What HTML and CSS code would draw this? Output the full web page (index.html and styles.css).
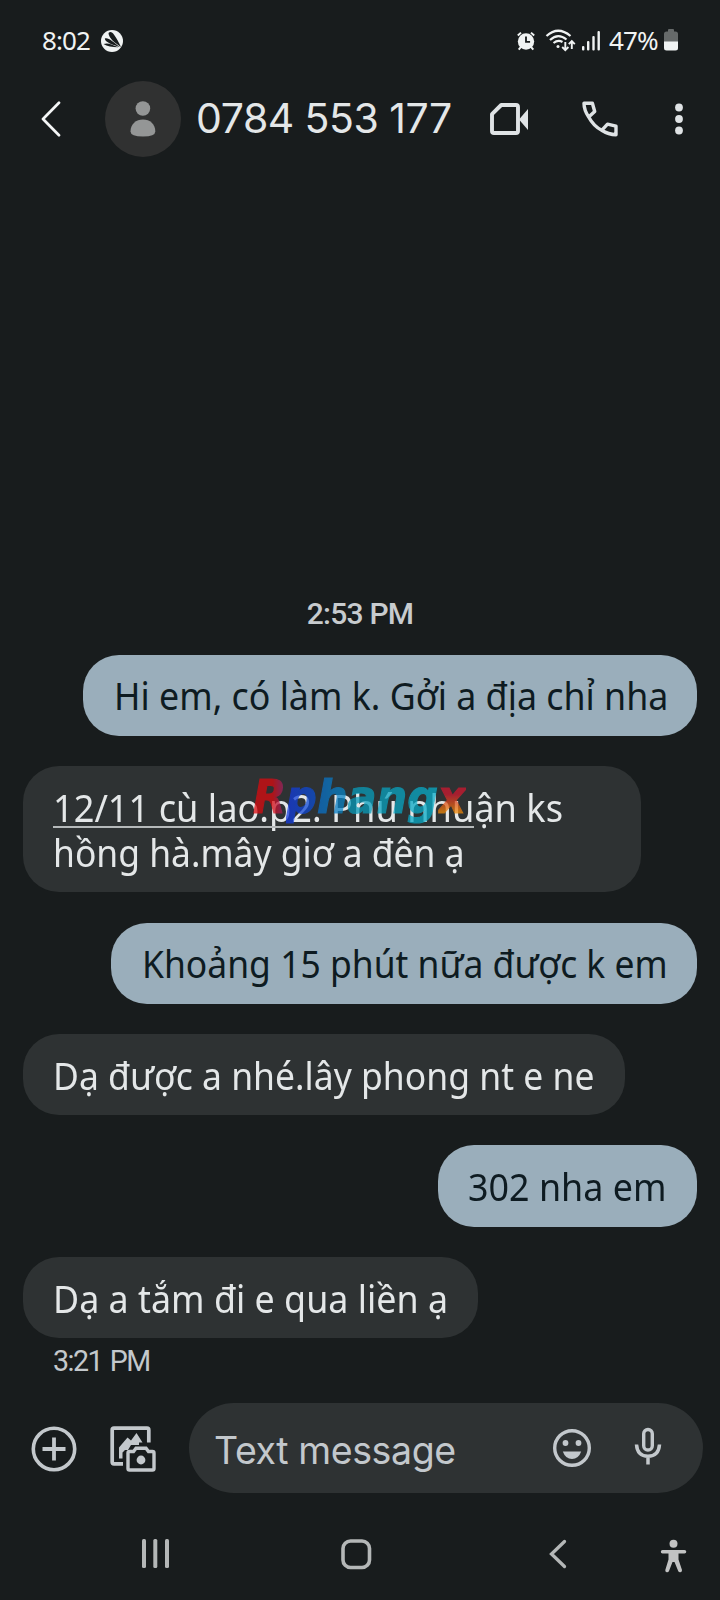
FILE: index.html
```html
<!DOCTYPE html>
<html lang="vi">
<head>
<meta charset="utf-8">
<title>0784 553 177</title>
<link rel="stylesheet" href="styles.css">
</head>
<body>
<div class="phone">
  <header class="status">
    <span class="clock">8:02</span>
    <svg class="i-app" width="24" height="24" viewBox="0 0 24 24"><circle cx="12" cy="12" r="11" fill="#f0f3f3"/><g fill="#181c1d"><path d="M8.500 4C11 1 14 3.500 21 18C15 14 8.500 9 8.500 4Z"/><path d="M4.800 9.500C8 8 13 12.500 20 18.200C13 15.700 5 13.500 4.800 9.500Z"/><path d="M3.500 15C8 13.300 12 15.500 18.500 18.300C12 17.800 7 17.500 3.500 15Z"/></g></svg>
    <span class="grow"></span>
    <svg class="i-alarm" width="20" height="20" viewBox="0 0 20 22"><circle cx="10" cy="11.500" r="9" fill="#f0f3f3"/><path d="M10 6v6h4.500" fill="none" stroke="#181c1d" stroke-width="2"/><path d="M1 5L4.500 1.800M19 5L15.500 1.800M4.500 17.500L2 20.500M15.500 17.500L18 20.500" stroke="#f0f3f3" stroke-width="2.200"/></svg>
    <svg class="i-wifi" width="31" height="24" viewBox="0 0 31 24" fill="none" stroke="#f0f3f3" stroke-width="2.200"><path d="M1.500 8Q13 -2.500 25.500 8M5 12Q13 4.500 21.500 11.500M8.500 15Q13 11.500 17.500 14"/><circle cx="13" cy="18.500" r="1.500" fill="#f0f3f3" stroke="none"/><path d="M20.300 14v8M17.200 19l3.100 3.100 3.100-3.100M26.800 21v-7.500M23.800 16.200l3-3 3 3" stroke-width="1.900"/></svg>
    <svg class="i-signal" width="18" height="20" viewBox="0 0 18 20" fill="#f0f3f3"><rect x="0" y="15" width="2.400" height="4.500" rx="1"/><rect x="5" y="10" width="2.400" height="9.500" rx="1"/><rect x="10.300" y="5" width="2.400" height="14.500" rx="1"/><rect x="15.500" y="0" width="2.400" height="19.500" rx="1"/></svg>
    <span class="percent">47%</span>
    <svg class="i-battery" width="14" height="22" viewBox="0 0 14 22"><path d="M4 2.500V1q0-1 1-1h4q1 0 1 1v1.500h1.500q2.500 0 2.500 2.500v8H0V5q0-2.500 2.500-2.500z" fill="#666a6a"/><path d="M0 12.500h14v6.500q0 2.500-2.500 2.500h-9Q0 21.500 0 19z" fill="#f0f3f3"/></svg>
  </header>

  <div class="appbar">
    <svg class="i-back" width="20" height="36" viewBox="0 0 20 36"><path d="M18 1.800L2 18l16 16.200" fill="none" stroke="#f4f6f6" stroke-width="2.700" stroke-linecap="round" stroke-linejoin="round"/></svg>
    <div class="avatar"><svg width="26" height="36" viewBox="0 0 26 36" fill="#949696"><circle cx="12.900" cy="7.500" r="7.300"/><path d="M.5 30.500C.5 23 6 18.500 13 18.500S25.300 23 25.300 30.500Q25.300 35.500 13 35.500T.5 30.500z"/></svg></div>
    <h1 class="title">0784 553 177</h1>
    <span class="grow"></span>
    <svg class="i-video" width="39" height="32" viewBox="0 0 39 32"><path d="M11.200 2H26q2 0 2 2v24q0 2-2 2H4q-2 0-2-2V11.200z" fill="none" stroke="#dfe3e5" stroke-width="3.900" stroke-linejoin="round"/><path d="M29 16.500L38 6v21z" fill="#dfe3e5"/></svg>
    <svg class="i-call" width="36" height="36" viewBox="0 0 36 36" fill="none" stroke="#dfe3e5" stroke-width="3.400" stroke-linejoin="round"><path d="M2 2.200h8.400l2.300 8.300-6 5.500Q2 9 2 2.200zM6.700 16Q11.500 25 19.700 29.300M19.700 29.300l5.800-6.200 8.500 2.100v8.500q-7.500 0-14.300-4.400z"/></svg>
    <svg class="i-more" width="8" height="32" viewBox="0 0 8 32" fill="#dfe3e5"><circle cx="4" cy="4.500" r="3.900"/><circle cx="4" cy="16" r="3.900"/><circle cx="4" cy="27.500" r="3.900"/></svg>
  </div>

  <main class="thread">
    <time class="day">2:53 PM</time>
    <div class="bubble sent w1"><span class="t1">Hi em, có làm k. Gởi a địa chỉ nha</span></div>
    <div class="bubble recv w2">
      <span class="t2">12/11 cù lao.p2. Phú nhuận ks</span>
      <span class="t3">hồng hà.mây giơ a đên ạ</span>
      <i class="rule"></i>
      <div class="mark"><span class="m1">R</span><span class="m2">p</span><span class="m3">h</span><span class="m4">ang</span><span class="m5">x</span></div>
    </div>
    <div class="bubble sent w3"><span class="t4">Khoảng 15 phút nữa được k em</span></div>
    <div class="bubble recv w4"><span class="t5">Dạ được a nhé.lây phong nt e ne</span></div>
    <div class="bubble sent w5"><span class="t6">302 nha em</span></div>
    <div class="bubble recv w6"><span class="t7">Dạ a tắm đi e qua liền ạ</span></div>
    <time class="stamp">3:21 PM</time>
  </main>

  <footer class="composer">
    <svg class="i-plus" width="46" height="46" viewBox="0 0 46 46" fill="none" stroke="#c3c8cc" stroke-width="3.600"><circle cx="23" cy="23" r="20.700"/><path d="M23 11.500v23M11.500 23h23" stroke-width="3.800"/></svg>
    <svg class="i-gallery" width="46" height="46" viewBox="0 0 46 46"><path d="M13 37.800H4q-1.800 0-1.800-1.800V4Q2.200 2.200 4 2.200h33q1.800 0 1.800 1.800v12.500" fill="none" stroke="#c3c8cc" stroke-width="3.700"/><path d="M9 32.500V21.500l8.500-10 3.500 3 5.500-7.500 6 9.500h-3.500v2.500h-8l-3 5h-3l-2.500 2.500v6z" fill="#c3c8cc"/><path d="M19.500 25.500h4l2.500-3.200h10l2.500 3.200h4q1.500 0 1.500 1.500v15.500q0 1.500-1.500 1.500h-23q-1.500 0-1.500-1.500V27q0-1.500 1.500-1.500z" fill="#181c1d" stroke="#c3c8cc" stroke-width="3.400"/><circle cx="31" cy="34" r="4.400" fill="#c3c8cc"/></svg>
    <div class="field">
      <span class="placeholder">Text message</span>
      <span class="grow"></span>
      <svg class="i-smile" width="38" height="38" viewBox="0 0 38 38" fill="#c3c8cc"><circle cx="19" cy="19" r="17.300" fill="none" stroke="#c3c8cc" stroke-width="3.400"/><circle cx="12.500" cy="14" r="2.900"/><circle cx="25.500" cy="14" r="2.900"/><path d="M9.800 22.500h18.400Q25.500 30 19 30T9.800 22.500z"/></svg>
      <svg class="i-mic" width="28" height="38" viewBox="0 0 28 38" fill="none" stroke="#c3c8cc"><rect x="9.700" y="2.500" width="8.600" height="20.500" rx="4.300" stroke-width="3.400"/><path d="M2.500 17.500q.8 11.800 11.500 11.800T25.500 17.500M14 29v8.500" stroke-width="3.500"/></svg>
    </div>
  </footer>

  <nav class="nav">
    <svg class="i-recent" width="28" height="30" viewBox="0 0 28 30" fill="#b4b7b7"><rect x="0" y="0" width="4" height="29" rx="1.500"/><rect x="11.300" y="0" width="4" height="29" rx="1.500"/><rect x="23" y="0" width="4" height="29" rx="1.500"/></svg>
    <svg class="i-home" width="32" height="32" viewBox="0 0 32 32"><rect x="2" y="2" width="26.500" height="26.500" rx="7.500" fill="none" stroke="#b4b7b7" stroke-width="3.600"/></svg>
    <svg class="i-prev" width="18" height="30" viewBox="0 0 18 30"><path d="M15.500 2.500L2.500 15l13 12.500" fill="none" stroke="#b4b7b7" stroke-width="3.300" stroke-linecap="round"/></svg>
    <svg class="i-access" width="28" height="34" viewBox="0 0 28 34" fill="#c2c3c3"><circle cx="13.500" cy="4.800" r="4"/><path d="M2.500 11h22q1.800 0 1.800 1.700t-1.800 1.800h-6v6L22 31q.3 2-1.500 2.200t-2.300-1.300L14.500 23h-2L9 31.900q-.6 1.500-2.300 1.300T5.300 31l3.200-10.500v-6h-6Q.8 14.400.8 12.700T2.500 11z"/></svg>
  </nav>
</div>
</body>
</html>
```
FILE: styles.css
```css
* { box-sizing: border-box; }
body { margin: 0; background: #181c1d; }
svg { display: block; flex: none; }

.phone {
  width: 720px;
  height: 1600px;
  overflow: hidden;
  background: #181c1d;
  color: #e4e7e8;
  font-family: "Noto Sans", sans-serif;
}
.grow { flex: 1; }

.status { height: 80px; display: flex; align-items: center; padding: 0 42px 0 42px; }
.clock, .percent { font-size: 26px; line-height: 36px; letter-spacing: -0.9px; color: #f0f3f3; white-space: nowrap; margin-top: -1px; }
.clock { width: 58px; }
.i-app { margin-top: 2px; }
.i-alarm { margin-right: 9px; margin-top: 1px; }
.i-wifi { margin-right: 6px; }
.i-signal { margin-right: 9px; margin-top: 1px; }
.percent { width: 55px; }

.appbar { height: 77px; display: flex; align-items: center; padding: 0 37px 0 41px; }
.avatar {
  width: 76px; height: 76px; margin-left: 44px; flex: none;
  border-radius: 50%; background: #303131;
  display: flex; align-items: center; justify-content: center;
}
.title { margin: -1px 0 0 15px; font: 400 41px/50px Inter, sans-serif; letter-spacing: -0.4px; word-spacing: -0.5px; white-space: nowrap; }
.i-video { margin-right: 53px; }
.i-call { margin-right: 57px; }

.thread { padding: 439px 23px 0 23px; display: flex; flex-direction: column; height: 1242px; }
.day { align-self: center; font: 500 30px/36px Roboto, sans-serif; letter-spacing: -0.78px; color: #c7cbce; margin-bottom: 22.600px; }
.bubble {
  position: relative;
  flex: none;
  padding: 18.900px 0 17.400px 30px;
  margin-bottom: 30.200px;
  border-radius: 36px;
  font-size: 38.500px;
  line-height: 45px;
  white-space: nowrap;
}
.bubble > span { display: block; transform-origin: 0 50%; }
.sent { align-self: flex-end; background: #9aaebb; color: #0e1b21; }
.recv { align-self: flex-start; background: #2e3233; color: #e4e7e8; }
.w1 { width: 614px; }
.w2 { width: 618px; }
.w3 { width: 586px; }
.w4 { width: 602px; }
.w5 { width: 259px; }
.w6 { width: 455px; margin-bottom: 4px; }
.t1 { transform: translateX(1px) scaleX(0.929); }
.t2 { transform: scaleX(0.940); }
.t3 { transform: scaleX(0.920); }
.t4 { transform: translateX(1px) scaleX(0.921); }
.t5 { transform: scaleX(0.922); }
.t6 { transform: scaleX(0.932); }
.t7 { transform: scaleX(0.931); }
.rule { position: absolute; left: 30px; top: 60px; width: 421px; height: 2px; background: #b5b9ba; }

.mark {
  position: absolute;
  left: 230px;
  top: 3px;
  font: italic 700 46px/56px "DejaVu Sans", sans-serif;
  transform: scaleX(0.935);
  transform-origin: 0 50%;
  opacity: 0.74;
}
.mark span { background-clip: text; -webkit-background-clip: text; color: transparent; -webkit-text-stroke: 1.200px transparent; }
.m1 { background-image: linear-gradient(90deg, #dc0a0f 60%, #8c2a78); }
.m2 { background-image: linear-gradient(90deg, #1438e0, #0c50d0); }
.m3 { background-image: linear-gradient(90deg, #0a6cc8, #0888c4); }
.m4 { background-image: linear-gradient(90deg, #0899b8, #08b0cc); }
.m5 { background-image: linear-gradient(180deg, #d01830 45%, #f08a08 78%); }

.stamp { margin-left: 30px; font: 400 29px/36px Roboto, sans-serif; letter-spacing: -1.500px; word-spacing: 2px; color: #c3c8cc; transform: translateY(1px) scaleX(.985); transform-origin: 0 50%; }

.composer { height: 98px; display: flex; align-items: center; padding: 0 17px 0 31px; }
.i-plus, .i-gallery { margin-top: 2px; }
.i-gallery { margin-left: 33px; }
.field { flex: 1; height: 90px; margin-left: 33px; border-radius: 45px; background: #2e3233; display: flex; align-items: center; padding: 0 41px 0 25px; }
.placeholder { font: 400 37.500px/48px Inter, sans-serif; letter-spacing: -0.400px; color: #c3c8cc; white-space: nowrap; margin-top: 5px; }
.i-mic { margin-left: 43px; margin-top: -4px; }

.nav { height: 114px; display: flex; align-items: center; padding-left: 142px; }
.i-home { margin-left: 171px; margin-top: 1px; }
.i-prev { margin-left: 176px; }
.i-access { margin-left: 93px; margin-top: 4px; }
```
